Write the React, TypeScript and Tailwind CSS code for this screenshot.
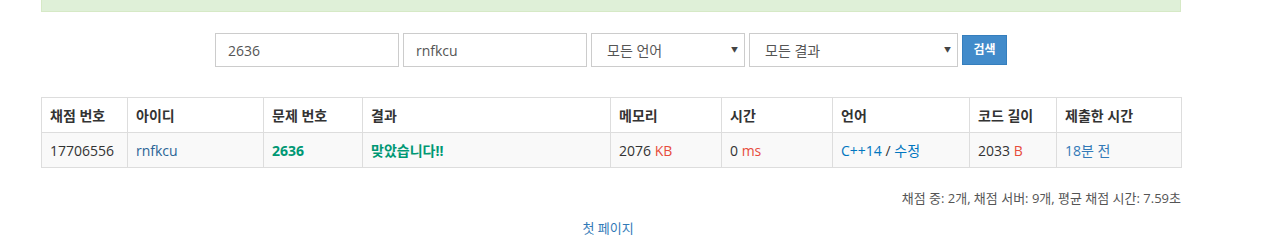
import React from "react";

const cols = [86, 136, 99, 248, 111, 111, 137, 87, 125];
const heads = ["채점 번호", "아이디", "문제 번호", "결과", "메모리", "시간", "언어", "코드 길이", "제출한 시간"];

function FakeSelect({ label, width }: { label: string; width: string }) {
  return (
    <div
      className={`${width} h-[34px] border border-[#ccc] bg-white flex items-center justify-between pl-[15px] pr-[6px] text-[14px] text-[#555]`}
    >
      <span>{label}</span>
      <span className="text-[7px] text-[#444]">▼</span>
    </div>
  );
}

export default function App() {
  return (
    <div
      className="w-[1276px] h-[252px] bg-white text-[#333] text-[14px] overflow-hidden"
      style={{ fontFamily: '"Open Sans", "Noto Sans CJK KR", sans-serif' }}
    >
      <div className="ml-[41px] w-[1140px]">
        <div className="h-[12px] bg-[#dff0d8] border-x border-b border-[#d6e9c6]" />

        <div className="mt-[21px] flex justify-center items-center gap-[4px]">
          <div className="w-[184px] h-[34px] border border-[#ccc] flex items-center px-[12px] text-[#555]">2636</div>
          <div className="w-[184px] h-[34px] border border-[#ccc] flex items-center px-[12px] text-[#555]">rnfkcu</div>
          <FakeSelect label="모든 언어" width="w-[154px]" />
          <FakeSelect label="모든 결과" width="w-[209px]" />
          <button className="w-[45px] h-[30px] bg-[#428bca] border border-[#357ebd] text-white text-[12px] font-bold">
            검색
          </button>
        </div>

        <table className="mt-[30px] w-[1140px] table-fixed border-collapse">
          <colgroup>
            {cols.map((w, i) => (
              <col key={i} style={{ width: w }} />
            ))}
          </colgroup>
          <thead>
            <tr className="h-[35px]">
              {heads.map((h) => (
                <th key={h} className="border border-[#ddd] px-[8px] text-left font-bold text-[#333]">
                  {h}
                </th>
              ))}
            </tr>
          </thead>
          <tbody>
            <tr className="h-[35px] bg-[#f9f9f9]">
              <td className="border border-[#ddd] px-[8px]">17706556</td>
              <td className="border border-[#ddd] px-[8px] text-[#2a6496]">rnfkcu</td>
              <td className="border border-[#ddd] px-[8px] font-bold text-[#009874]">2636</td>
              <td className="border border-[#ddd] px-[8px] font-bold text-[#009874]">맞았습니다!!</td>
              <td className="border border-[#ddd] px-[8px]">
                2076 <span className="text-[#e74c3c]">KB</span>
              </td>
              <td className="border border-[#ddd] px-[8px]">
                0 <span className="text-[#e74c3c]">ms</span>
              </td>
              <td className="border border-[#ddd] px-[8px]">
                <span className="text-[#0076c0]">C++14</span> / <span className="text-[#0076c0]">수정</span>
              </td>
              <td className="border border-[#ddd] px-[8px]">
                2033 <span className="text-[#e74c3c]">B</span>
              </td>
              <td className="border border-[#ddd] px-[8px] text-[#337ab7]">18분 전</td>
            </tr>
          </tbody>
        </table>

        <div className="mt-[21px] text-right text-[13px] text-[#555]">
          채점 중: 2개, 채점 서버: 9개, 평균 채점 시간: 7.59초
        </div>
        <div className="mt-[10px] pr-[6px] text-center text-[13px] text-[#337ab7]">첫 페이지</div>
      </div>
    </div>
  );
}
